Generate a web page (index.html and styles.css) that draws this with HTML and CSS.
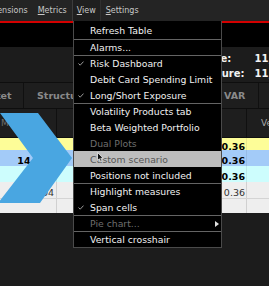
FILE: index.html
```html
<!DOCTYPE html>
<html lang="en">
<head>
<meta charset="UTF-8">
<title>Risk Dashboard - View menu</title>
<link rel="stylesheet" href="styles.css">
</head>
<body>
  <nav class="menubar">
    <span class="mb-item first"><u>D</u>imensions</span>
    <span class="mb-item"><u>M</u>etrics</span>
    <span class="mb-item open"><u>V</u>iew</span>
    <span class="mb-item"><u>S</u>ettings</span>
  </nav>
  <div class="toolbar"></div>

  <div class="summary">
    <span class="label">Long Value:</span><span class="value">11,482,305</span>
    <span class="label">Net Exposure:</span><span class="value">11,064,918</span>
  </div>

  <div class="grid">
    <div class="row head">
      <div class="cell c-market">Market</div>
      <div class="cell c-fill">Structure</div>
      <div class="cell c-var">VAR</div>
      <div class="cell c-last"></div>
    </div>
    <div class="row sub">
      <div class="cell c-key">Mkt Value</div>
      <div class="cell c-fill"></div>
      <div class="cell c-num"></div>
      <div class="cell c-end">Vega</div>
    </div>
    <div class="row yellow strong">
      <div class="cell c-key"></div>
      <div class="cell c-fill"></div>
      <div class="cell c-num">0.36</div>
      <div class="cell c-end"></div>
    </div>
    <div class="row blue strong">
      <div class="cell c-key">14,750</div>
      <div class="cell c-fill"></div>
      <div class="cell c-num">0.36</div>
      <div class="cell c-end"></div>
    </div>
    <div class="row cyan strong">
      <div class="cell c-key"></div>
      <div class="cell c-fill"></div>
      <div class="cell c-num">0.36</div>
      <div class="cell c-end"></div>
    </div>
    <div class="row plain">
      <div class="cell c-key">1,204</div>
      <div class="cell c-fill"></div>
      <div class="cell c-num">0.36</div>
      <div class="cell c-end"></div>
    </div>
    <div class="row plain last">
      <div class="cell c-key"></div>
      <div class="cell c-fill"></div>
      <div class="cell c-num"></div>
      <div class="cell c-end"></div>
    </div>
  </div>

  <!-- big "next" chevron drawn over the grid -->
  <svg class="chevron" width="269" height="286" viewBox="0 0 269 286">
    <polygon points="0,113 38,113 72,158 40,203 -2,203 33,158" fill="#49a6e1"/>
  </svg>

  <div class="dropdown">
    <div class="item first"><span class="mark"></span>Refresh Table</div>
    <div class="item sep"><span class="mark"></span>Alarms...</div>
    <div class="item sep"><span class="mark"><svg width="6" height="5" viewBox="0 0 6 5"><polyline points="0.5,2.5 2.2,4.2 5.5,0.6" fill="none" stroke="#9a9a9a" stroke-width="1"/></svg></span>Risk Dashboard</div>
    <div class="item"><span class="mark"></span>Debit Card Spending Limit</div>
    <div class="item"><span class="mark"><svg width="6" height="5" viewBox="0 0 6 5"><polyline points="0.5,2.5 2.2,4.2 5.5,0.6" fill="none" stroke="#9a9a9a" stroke-width="1"/></svg></span>Long/Short Exposure</div>
    <div class="item sep"><span class="mark"></span>Volatility Products tab</div>
    <div class="item"><span class="mark"></span>Beta Weighted Portfolio</div>
    <div class="item disabled"><span class="mark"></span>Dual Plots</div>
    <div class="item active"><span class="mark"></span>Custom scenario</div>
    <div class="item"><span class="mark"></span>Positions not included</div>
    <div class="item sep"><span class="mark"></span>Highlight measures</div>
    <div class="item"><span class="mark"><svg width="6" height="5" viewBox="0 0 6 5"><polyline points="0.5,2.5 2.2,4.2 5.5,0.6" fill="none" stroke="#9a9a9a" stroke-width="1"/></svg></span>Span cells</div>
    <div class="item sep disabled"><span class="mark"></span>Pie chart...<span class="arrow"></span></div>
    <div class="item sep"><span class="mark"></span>Vertical crosshair</div>
  </div>

  <svg class="cursor" width="7" height="11" viewBox="0 0 7 11">
    <path d="M0.5 0.5 L0.5 8.5 L2.4 6.8 L3.7 9.8 L5 9.2 L3.8 6.3 L6.2 6.3 Z" fill="#111" stroke="#eee" stroke-width="0.8"/>
  </svg>
</body>
</html>
```

FILE: styles.css
```css
  body {
    margin: 0;
    width: 269px;
    height: 286px;
    overflow: hidden;
    position: relative;
    background-color: #1c1c1c;
    font-family: "DejaVu Sans", "Liberation Sans", sans-serif;
  }

  /* top menu bar */
  .menubar {
    display: flex;
    align-items: center;
    height: 21px;
    background-color: #242424;
    border-bottom: 2px solid #d40000;
    font-size: 8px;
    color: #c8c8c8;
    white-space: nowrap;
  }

  .mb-item {
    box-sizing: border-box;
    height: 21px;
    line-height: 21px;
    padding: 0 5px;
  }

  .mb-item u {
    text-underline-offset: 1px;
  }

  .mb-item.first {
    margin-left: -24px;
  }

  .mb-item.open {
    background-color: #1f1f1f;
    border-left: 1px solid #3c3c3c;
    border-right: 1px solid #303030;
    padding: 0 4px;
  }

  .toolbar {
    height: 24px;
    background-color: #000;
  }

  /* summary numbers on the right */
  .summary {
    display: grid;
    grid-template-columns: max-content max-content;
    column-gap: 10px;
    height: 35px;
    box-sizing: border-box;
    padding: 5px 0 0 165px;
    font-size: 10px;
    font-weight: bold;
    line-height: 13px;
    color: #f2f2f2;
    white-space: nowrap;
  }

  /* grid */
  .grid {
    width: 269px;
    overflow: hidden;
  }

  .row {
    display: flex;
    width: 300px;
    box-sizing: border-box;
    white-space: nowrap;
  }

  .cell {
    box-sizing: border-box;
    overflow: hidden;
  }

  .head {
    height: 27px;
    border-top: 1px solid #0e0e0e;
    border-bottom: 1px solid #0e0e0e;
    background-color: #1e1e1e;
    font-size: 9.5px;
    font-weight: bold;
    color: #8a8a8a;
    line-height: 25px;
  }

  .head .cell {
    border-right: 1px solid #101010;
  }

  .c-market {
    width: 54px;
    margin-left: -30px;
    padding-left: 4px;
  }

  .c-fill {
    flex: 1;
  }

  .head .c-fill {
    padding-left: 13px;
  }

  .c-var {
    width: 37px;
    padding-left: 2px;
  }

  .c-last {
    width: 41px;
  }

  .sub {
    height: 29px;
    background-color: #1e1e1e;
    border-bottom: 1px solid #101010;
    font-size: 9px;
    color: #6e6e6e;
    line-height: 28px;
  }

  .sub .cell {
    border-right: 1px solid #101010;
  }

  .sub .c-end {
    color: #a8a8a8;
    padding-left: 14px;
  }

  .c-key {
    width: 57px;
    padding-right: 2px;
    text-align: right;
  }

  .sub .c-key {
    text-align: left;
    padding-left: 1px;
  }

  .c-num {
    width: 40px;
    padding-right: 1px;
    text-align: right;
  }

  .c-end {
    width: 53px;
  }

  .yellow, .blue, .cyan, .plain {
    align-items: center;
    padding-top: 5px;
    font-size: 9.5px;
    line-height: 10px;
  }

  .yellow .cell, .blue .cell, .cyan .cell, .plain .cell {
    align-self: stretch;
    display: flex;
    align-items: center;
    justify-content: flex-end;
    margin-top: -5px;
    padding-top: 5px;
  }

  .yellow .c-fill, .blue .c-fill, .cyan .c-fill, .plain .c-fill,
  .yellow .c-end, .blue .c-end, .cyan .c-end, .plain .c-end {
    justify-content: flex-start;
  }

  .strong {
    font-weight: bold;
    color: #000;
  }

  .yellow { height: 12px; background-color: #fdfd98; }
  .blue { height: 16px; background-color: #a3cbf8; }
  .cyan { height: 16px; background-color: #cdfdfd; }

  .plain {
    height: 17px;
    background-color: #eeeeee;
    color: #333;
    border-bottom: 1px solid #d4d4d4;
  }

  .plain.last {
    height: 14px;
    border-bottom: none;
  }

  .yellow .c-key, .blue .c-key, .cyan .c-key,
  .yellow .c-num, .blue .c-num, .cyan .c-num {
    border-right: 1px solid rgba(0, 0, 0, 0.08);
  }

  .plain .c-key, .plain .c-num {
    border-right: 1px solid #d0d0d0;
  }

  .chevron {
    position: absolute;
    left: 0;
    top: 0;
  }

  /* open View menu */
  .dropdown {
    position: absolute;
    left: 73px;
    top: 21px;
    width: 149px;
    box-sizing: border-box;
    background-color: #000;
    border: 1px solid #4a4a4a;
    border-top: none;
    font-size: 9.3px;
    color: #f2f2f2;
  }

  .item {
    display: flex;
    align-items: center;
    height: 16px;
    box-sizing: border-box;
    white-space: nowrap;
  }

  .item.first {
    height: 18px;
    padding-top: 1px;
  }

  .item.sep {
    border-top: 1px solid #646464;
  }

  .mark {
    display: flex;
    align-items: center;
    width: 16px;
    padding-left: 4px;
    box-sizing: border-box;
  }

  .item.disabled {
    color: #6e6e6e;
  }

  .item.active {
    background-color: #bdbdbd;
    color: #555;
  }

  .arrow {
    margin-left: auto;
    margin-right: 2px;
    width: 0;
    height: 0;
    border-top: 3px solid transparent;
    border-bottom: 3px solid transparent;
    border-left: 4px solid #e0e0e0;
  }

  .cursor {
    position: absolute;
    left: 97px;
    top: 152px;
  }
```
